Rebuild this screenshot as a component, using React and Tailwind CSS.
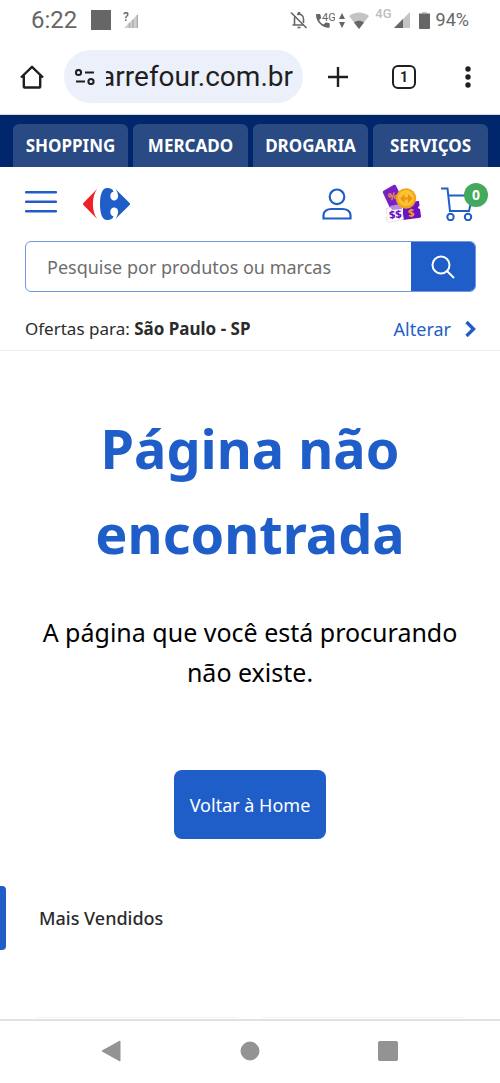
import { useState } from 'react';

const TABS = ['SHOPPING', 'MERCADO', 'DROGARIA', 'SERVIÇOS'];

const NAV_BUTTONS = [
  { label: 'Voltar', shape: <path d="M19 1v20L1 11z" strokeLinejoin="round" /> },
  { label: 'Tela inicial', shape: <circle cx="11" cy="11" r="9" /> },
  { label: 'Recentes', shape: <rect x="1.500" y="1.500" width="19" height="19" rx="1" /> },
];

function StatusBar() {
  return (
    <div className="flex h-10 items-center justify-between px-[31px] text-[#666]">
      <div className="flex items-center">
        <span className="text-2xl">6:22</span>
        <span className="ml-[14px] size-5 bg-[#666]" />
        <svg className="ml-3 h-[18px] w-4" viewBox="0 0 16 18">
          <path d="M1 17 15 3v14z" fill="#cfcfcf" />
          <path d="M6.500 12v5M10 9v8M14.300 4v13" stroke="#aaa" strokeWidth="1.300" />
          <text x="0" y="10" fontSize="12" fontWeight="500" fill="#666">?</text>
        </svg>
      </div>

      <div className="flex items-center">
        <svg className="h-[18px] w-[18px]" viewBox="0 0 18 18" fill="none" stroke="#666" strokeWidth="1.6">
          <path d="M1 1.500 16.500 17" />
          <path d="M4.500 14V8c0-1 .3-2 .8-2.700M7 3.600A4.500 4.500 0 0 1 13.500 8v4M2.500 14h11" />
          <path d="M9 1v2.500" strokeWidth="2.400" />
          <path d="M7.500 16.500h3" />
        </svg>
        <svg className="ml-2 h-[18px] w-[19px]" viewBox="0 0 19 18">
          <path
            d="M0 4.200c0-.7.400-1.100 1-1.100h2.600c.5 0 .8.3.9.800l.5 2.500c.1.400 0 .8-.3 1L3.100 9c1 2 2.500 3.500 4.500 4.500l1.600-1.600c.3-.3.600-.4 1-.3l2.700.5c.5.1.8.5.8 1v2.600c0 .6-.4 1-1 1C6 16.700 0 10.500 0 4.200z"
            fill="#666"
          />
          <text x="6" y="10" fontSize="11" fill="#666">4G</text>
        </svg>
        <svg className="ml-1 h-[15px] w-[6px]" viewBox="0 0 6 15" fill="#666">
          <path d="M3 0l3 6H0zM3 15l3-6H0z" />
        </svg>
        <svg className="ml-1 h-[17px] w-5" viewBox="0 0 20 17">
          <path d="M0 4C5.500-.8 14.500-.8 20 4L10 17z" fill="#c4c4c4" />
          <path d="M5 10.500c3-2.400 7-2.400 10 0L10 17z" fill="#666" />
        </svg>
        <span className="ml-[6px] pb-[13px] text-[13px] leading-none font-medium text-[#bdbdbd]">4G</span>
        <svg className="ml-[2px] h-4 w-4" viewBox="0 0 16 16">
          <path d="M0 16 16 0v16z" fill="#c4c4c4" />
          <path d="M0 16 9 7v9z" fill="#666" />
        </svg>
        <svg className="ml-[9px] h-[17px] w-[11px]" viewBox="0 0 11 17">
          <path d="M3 0h5v1.500H3z" fill="#c4c4c4" />
          <path d="M0 1.500h11V16a1 1 0 0 1-1 1H1a1 1 0 0 1-1-1z" fill="#666" />
        </svg>
        <span className="ml-[6px] text-lg">94%</span>
      </div>
    </div>
  );
}

function BrowserBar() {
  const [url, setUrl] = useState('carrefour.com.br');

  return (
    <div className="flex h-[75px] items-center border-b border-[#d8d8d8] pr-[26px] pb-px pl-5 text-[#1f1f1f]">
      <button type="button" aria-label="Início">
        <svg className="size-6" viewBox="0 0 24 24" fill="none" stroke="currentColor" strokeWidth="2.400">
          <path
            d="M1 12.500 12 1.800l11 10.700M3.800 10.500v11.200c0 .5.300.8.800.8h14.800c.5 0 .8-.3.800-.8V10.500"
            strokeLinejoin="round"
          />
        </svg>
      </button>

      <div className="ml-5 flex h-[53px] min-w-0 flex-1 items-center rounded-full bg-[#ebf0fa] pr-[10px] pl-[11px]">
        <svg className="h-4 w-5 shrink-0" viewBox="0 0 20 16" fill="none" stroke="currentColor" strokeWidth="2">
          <circle cx="3.500" cy="3.500" r="2.600" />
          <path d="M10 3.500h9M1 12.500h9" />
          <circle cx="16" cy="12.500" r="2.600" />
        </svg>
        <div className="ml-[11px] flex min-w-0 flex-1 justify-end overflow-hidden">
          <input
            type="text"
            aria-label="Endereço"
            value={url}
            onChange={(e) => setUrl(e.target.value)}
            className="w-[240px] shrink-0 bg-transparent text-right text-[28px] leading-9 outline-none"
          />
        </div>
      </div>

      <button type="button" aria-label="Nova aba" className="ml-[25px]">
        <svg className="size-5" viewBox="0 0 20 20" stroke="currentColor" strokeWidth="2.400">
          <path d="M10 0v20M0 10h20" />
        </svg>
      </button>
      <button
        type="button"
        aria-label="Abas abertas"
        className="ml-11 flex size-6 items-center justify-center rounded-md border-2 border-current text-sm leading-none font-bold"
      >
        1
      </button>
      <button type="button" aria-label="Mais opções" className="ml-[46px]">
        <svg className="h-[22px] w-3" viewBox="0 0 12 22" fill="currentColor">
          <circle cx="6" cy="3" r="2.700" />
          <circle cx="6" cy="11" r="2.700" />
          <circle cx="6" cy="19" r="2.700" />
        </svg>
      </button>
    </div>
  );
}

function Logo() {
  return (
    <svg className="h-8 w-[47px]" viewBox="0 0 47 32">
      <path d="M14 1C8.500 9 8.500 23 14 30.700L.4 17c-.6-.6-.6-1.400 0-2z" fill="#ee2226" />
      <path
        d="M24 0c3.500 0 6.500 1.500 6.300 3.800C27.500 4.500 26.500 8 28 10.700c1.800 2.800 6.300 2.200 7-1.400.4-2.800-.8-5.500-2.300-8L46.600 15c.6.600.6 1.400 0 2L32.700 30.700c1.500-2.500 2.700-5.200 2.300-8-.7-3.600-5.200-4.200-7-1.400-1.500 2.700-.5 6.200 2.300 6.900.2 2.300-2.800 3.800-6.300 3.800-5 0-7-7-7-16S19 0 24 0z"
        fill="#1f5ec9"
      />
    </svg>
  );
}

function CouponIcon() {
  return (
    <svg className="size-10" viewBox="0 0 40 40">
      <path d="M3 6.500 12.500 1c1-.5 2-.3 2.500.7l9 17.800-12 7-3.500-3.500L2 9c-.4-1-.1-2 1-2.500z" fill="#7a1fc8" />
      <path d="M22 20l3 1.500 5-4 8-.5.500 5c-2 .7-1.700 3 .5 3l1 7c.2 1-.2 1.500-1 1.700L22 36z" fill="#6a12c4" />
      <path
        d="M5.500 24.500 20 21.500l2.500 13.800-14.500 3c-1 .2-1.700-.3-1.900-1.200L5.500 33c2-.6 1.700-3-.4-3.200z"
        fill="#fff"
        stroke="#ddd"
        strokeWidth=".8"
      />
      <path d="M9 22l10-2 2 5-10 1z" fill="#b98be0" />
      <g fontWeight="800">
        <text x="7" y="16" fontSize="10" fill="#e8963a" transform="rotate(-12 11 12)">%</text>
        <text x="8" y="34.500" fontSize="11" fill="#6a12c4" transform="rotate(-6 14 30)">$$</text>
        <text x="27" y="33" fontSize="11" fill="#f0a020" transform="rotate(-6 30 29)">$</text>
      </g>
      <circle cx="25" cy="14.500" r="10.200" fill="#f2a51c" />
      <circle cx="25" cy="14" r="8" fill="#fbc235" />
      <path d="M23.500 10 19 14.500l4.500 4.500zM27 10l4.500 4.500L27 19zM23.500 13.500h4v2h-4z" fill="#e89413" />
    </svg>
  );
}

function CartIcon() {
  return (
    <svg className="h-[34px] w-[34px]" viewBox="0 0 34 34" fill="none" stroke="#1f5ec9" strokeWidth="2">
      <path d="M0 1.500h6.500L9 24h19l3.500-15.500H7" />
      <circle cx="9.500" cy="30" r="3.200" />
      <circle cx="27" cy="30" r="3.200" />
    </svg>
  );
}

function Header() {
  return (
    <header>
      <nav className="grid grid-cols-4 gap-[5px] bg-[#00276b] pt-[9px] pr-3 pl-[13px]">
        {TABS.map((tab) => (
          <a
            key={tab}
            href="#"
            className="flex h-[43px] items-center justify-center rounded-t-md bg-[#294a83] text-[17px] font-bold text-white"
          >
            {tab}
          </a>
        ))}
      </nav>

      <div className="flex h-[74px] items-center justify-between px-[25px]">
        <div className="flex items-center gap-[26px]">
          <button type="button" aria-label="Menu">
            <svg className="h-7 w-8" viewBox="0 0 32 28" stroke="#1f5ec9" strokeWidth="2.400" strokeLinecap="round">
              <path d="M1 2.200h30M1 11.700h30M1 21.200h30" />
            </svg>
          </button>
          <a href="#" aria-label="Carrefour">
            <Logo />
          </a>
        </div>
        <div className="flex items-center">
          <button type="button" aria-label="Minha conta">
            <svg className="h-8 w-[30px]" viewBox="0 0 30 32" fill="none" stroke="#1f5ec9" strokeWidth="2.200">
              <circle cx="15" cy="8.800" r="7.300" />
              <path d="M1.500 30.500V27c0-3.500 3.500-6 8-6h11c4.500 0 8 2.500 8 6v3.500z" />
            </svg>
          </button>
          <a href="#" aria-label="Cupons" className="ml-[29px]">
            <CouponIcon />
          </a>
          <a href="#" aria-label="Carrinho" className="relative ml-5">
            <CartIcon />
            <span className="absolute -top-1 -right-[13px] flex size-6 items-center justify-center rounded-full bg-[#43a95c] text-sm leading-none font-bold text-white">
              0
            </span>
          </a>
        </div>
      </div>

      <form
        className="mr-6 ml-[25px] flex h-[51px] overflow-hidden rounded-md border border-[#6f98de]"
        onSubmit={(e) => e.preventDefault()}
      >
        <input
          type="search"
          aria-label="Pesquisar"
          placeholder="Pesquise por produtos ou marcas"
          className="min-w-0 flex-1 pl-[21px] text-lg outline-none placeholder:text-[#6d6d6d]"
        />
        <button type="submit" aria-label="Buscar" className="flex w-16 items-center justify-center bg-[#1f5ec9]">
          <svg className="size-6" viewBox="0 0 24 24" fill="none" stroke="#fff" strokeWidth="2">
            <circle cx="10" cy="10" r="8.500" />
            <path d="M16 16l7 7" />
          </svg>
        </button>
      </form>

      <div className="flex h-[59px] items-center justify-between border-b border-[#ebebeb] pt-4 pr-6 pl-[25px] text-[#2b2b2b]">
        <p className="text-[17px]">
          Ofertas para: <strong>São Paulo - SP</strong>
        </p>
        <a href="#" className="flex items-center gap-[14px] text-lg text-[#1f5ec9]">
          Alterar
          <svg className="h-4 w-[11px]" viewBox="0 0 11 16" fill="none" stroke="currentColor" strokeWidth="3.400">
            <path d="M1.500 1l7 7-7 7" />
          </svg>
        </a>
      </div>
    </header>
  );
}

function BestSellers() {
  return (
    <section className="mt-[47px] flex flex-1 flex-col">
      <div className="flex h-16 items-center">
        <span className="h-full w-[6px] rounded-r-sm bg-[#1f5ec9]" />
        <h2 className="ml-[33px] text-lg font-medium text-[#2b2b2b]">Mais Vendidos</h2>
      </div>
      {/* tops of the product cards, cut off by the navigation bar */}
      <div className="mt-auto grid grid-cols-2 gap-6 px-9">
        <div className="h-[2px] rounded-t border-t border-[#f3f3f3]" />
        <div className="h-[2px] rounded-t border-t border-[#f3f3f3]" />
      </div>
    </section>
  );
}

function NavBar() {
  return (
    <div className="flex h-16 items-center justify-between border-t-2 border-[#e2e2e2] px-[101px] pb-[2px]">
      {NAV_BUTTONS.map(({ label, shape }) => (
        <button key={label} type="button" aria-label={label}>
          <svg className="size-[22px] fill-[#939393] stroke-[#939393]" viewBox="0 0 22 22">
            {shape}
          </svg>
        </button>
      ))}
    </div>
  );
}

export default function App() {
  return (
    <div className="flex min-h-screen flex-col bg-white">
      <div className="font-[Roboto,sans-serif]">
        <StatusBar />
        <BrowserBar />
      </div>

      <div className="flex flex-1 flex-col font-['Noto_Sans',sans-serif]">
        <Header />
        <main className="flex flex-1 flex-col pt-[55px]">
          <div className="flex flex-col items-center px-9 text-center">
            <h1 className="text-[54px] leading-[85px] font-bold text-[#1f5ec9]">
              Página não <br />
              encontrada
            </h1>
            <p className="mt-9 text-[25px] leading-10 text-black">
              A página que você está procurando não existe.
            </p>
            <a
              href="#"
              className="mt-[78px] flex h-[69px] items-center rounded-lg bg-[#1f5ec9] px-4 text-lg text-white"
            >
              Voltar à Home
            </a>
          </div>
          <BestSellers />
        </main>
      </div>

      <NavBar />
    </div>
  );
}
